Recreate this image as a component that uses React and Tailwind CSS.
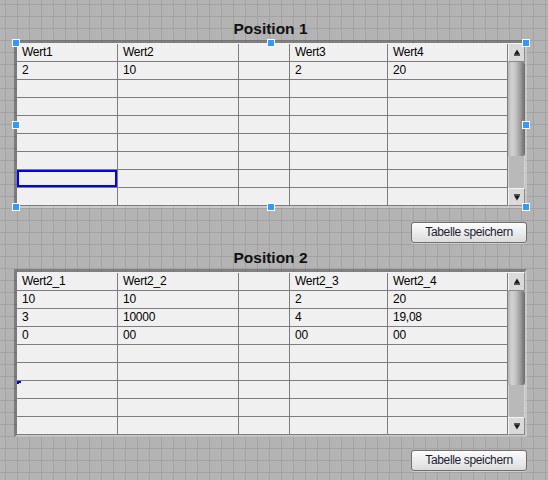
import React from "react";

const COLS = [101, 121, 51, 98, 120];
const FONT = { fontFamily: '"Liberation Sans", Arial, sans-serif' };

function Arrow({ up }) {
  return (
    <svg width="8" height="7" viewBox="0 0 8 7" className="block">
      {up ? (
        <g fill="#1a1a1a">
          <polygon points="4,0.5 7,5.5 1,5.5" />
          <rect x="1" y="5.5" width="6" height="1.2" />
        </g>
      ) : (
        <g fill="#1a1a1a">
          <rect x="1" y="0.3" width="6" height="1.2" />
          <polygon points="1,1.5 7,1.5 4,6.5" />
        </g>
      )}
    </svg>
  );
}

function Scrollbar() {
  return (
    <div className="flex flex-col w-[17px] h-[163px]">
      <div className="h-[19px] flex items-center justify-center bg-[#dadada] border-t border-l border-t-[#f4f4f4] border-l-[#f4f4f4] border-b border-r border-b-[#8a8a8a] border-r-[#8a8a8a]">
        <Arrow up />
      </div>
      <div className="h-[94px] rounded-[3px] bg-[linear-gradient(to_right,#b4b4b4,#d2d2d2_22%,#c4c4c4_45%,#a0a0a0_70%,#6a6a6a)]" />
      <div className="h-[32px] bg-[#b9b9b9] border-l border-r border-[#d2d2d2]" />
      <div className="h-[18px] flex items-center justify-center bg-[#dadada] border-t border-l border-t-[#f4f4f4] border-l-[#f4f4f4] border-b border-r border-b-[#8a8a8a] border-r-[#8a8a8a]">
        <Arrow />
      </div>
    </div>
  );
}

function Handle({ className }) {
  return (
    <div
      className={
        "absolute w-[8px] h-[8px] border border-white bg-[#3399ff] " + className
      }
    />
  );
}

function Table({ header, rows, selected, mark, handles }) {
  const all = [header, ...rows];
  return (
    <div className="relative w-[513px] h-[168px]">
      <div className="flex w-full h-full border-t-[3px] border-l-[3px] border-b-2 border-r-2 border-t-[rgba(0,0,0,0.28)] border-l-[rgba(0,0,0,0.3)] border-b-[rgba(255,255,255,0.3)] border-r-[rgba(255,255,255,0.3)]">
        <div className="flex flex-col w-[491px] bg-[#f0f0f0]">
          {all.map((r, ri) => (
            <div
              key={ri}
              className={
                "flex " + (ri === 0 ? "h-[19px] pt-[1px]" : "h-[18px]")
              }
            >
              {r.map((v, ci) => (
                <div
                  key={ci}
                  style={{ width: COLS[ci] }}
                  className="relative shrink-0 border-r border-b border-[#7d7d7d] pl-[5px] text-[12px] leading-[17px] text-black tracking-[-0.25px] whitespace-nowrap overflow-hidden"
                >
                  {v}
                  {selected && selected[0] === ri && selected[1] === ci && (
                    <div className="absolute inset-0 border-2 border-[#0000ff]" />
                  )}
                  {mark && mark[0] === ri && mark[1] === ci && (
                    <div className="absolute left-0 top-0 w-[4px] h-[3px] border-t-2 border-l-2 border-[#0000ff]" />
                  )}
                </div>
              ))}
            </div>
          ))}
        </div>
        <Scrollbar />
      </div>
      {handles && (
        <>
          <Handle className="left-[-2px] top-[-1px]" />
          <Handle className="left-[253px] top-[-1px]" />
          <Handle className="left-[508px] top-[-1px]" />
          <Handle className="left-[-2px] top-[81px]" />
          <Handle className="left-[508px] top-[81px]" />
          <Handle className="left-[-2px] top-[163px]" />
          <Handle className="left-[253px] top-[163px]" />
          <Handle className="left-[508px] top-[163px]" />
        </>
      )}
    </div>
  );
}

function SaveButton() {
  return (
    <div className="flex justify-end w-[513px]">
      <button className="w-[116px] h-[21px] rounded-[3px] border border-[#707070] bg-[linear-gradient(to_bottom,#fcfcfc,#ececec_50%,#dcdcdc)] text-[12px] leading-[19px] text-[#1c1c36] tracking-[-0.35px] shadow-[0_1px_0_rgba(255,255,255,0.4)]">
        Tabelle speichern
      </button>
    </div>
  );
}

const empty = ["", "", "", "", ""];

export default function App() {
  const rows1 = [["2", "10", "", "2", "20"], ...Array(7).fill(empty)];
  const rows2 = [
    ["10", "10", "", "2", "20"],
    ["3", "10000", "", "4", "19,08"],
    ["0", "00", "", "00", "00"],
    ...Array(5).fill(empty),
  ];
  return (
    <div
      style={FONT}
      className="w-[548px] h-[480px] overflow-hidden bg-[#b3b3b3] bg-[linear-gradient(to_right,#a3a3a3_1px,transparent_1px),linear-gradient(to_bottom,#a3a3a3_1px,transparent_1px)] bg-[size:12px_12px] bg-[position:5px_4px] pl-[14px] pt-[20px] flex flex-col"
    >
      <div className="w-[513px] h-[18px] text-center text-[15.5px] leading-[18px] font-bold text-[#111]">
        Position 1
      </div>
      <div className="mt-[2px]">
        <Table
          header={["Wert1", "Wert2", "", "Wert3", "Wert4"]}
          rows={rows1}
          selected={[7, 0]}
          handles
        />
      </div>
      <div className="mt-[14px]">
        <SaveButton />
      </div>
      <div className="mt-[6px] w-[513px] h-[18px] text-center text-[15.5px] leading-[18px] font-bold text-[#111]">
        Position 2
      </div>
      <div className="mt-[2px]">
        <Table
          header={["Wert2_1", "Wert2_2", "", "Wert2_3", "Wert2_4"]}
          rows={rows2}
          mark={[6, 0]}
        />
      </div>
      <div className="mt-[13px]">
        <SaveButton />
      </div>
    </div>
  );
}
